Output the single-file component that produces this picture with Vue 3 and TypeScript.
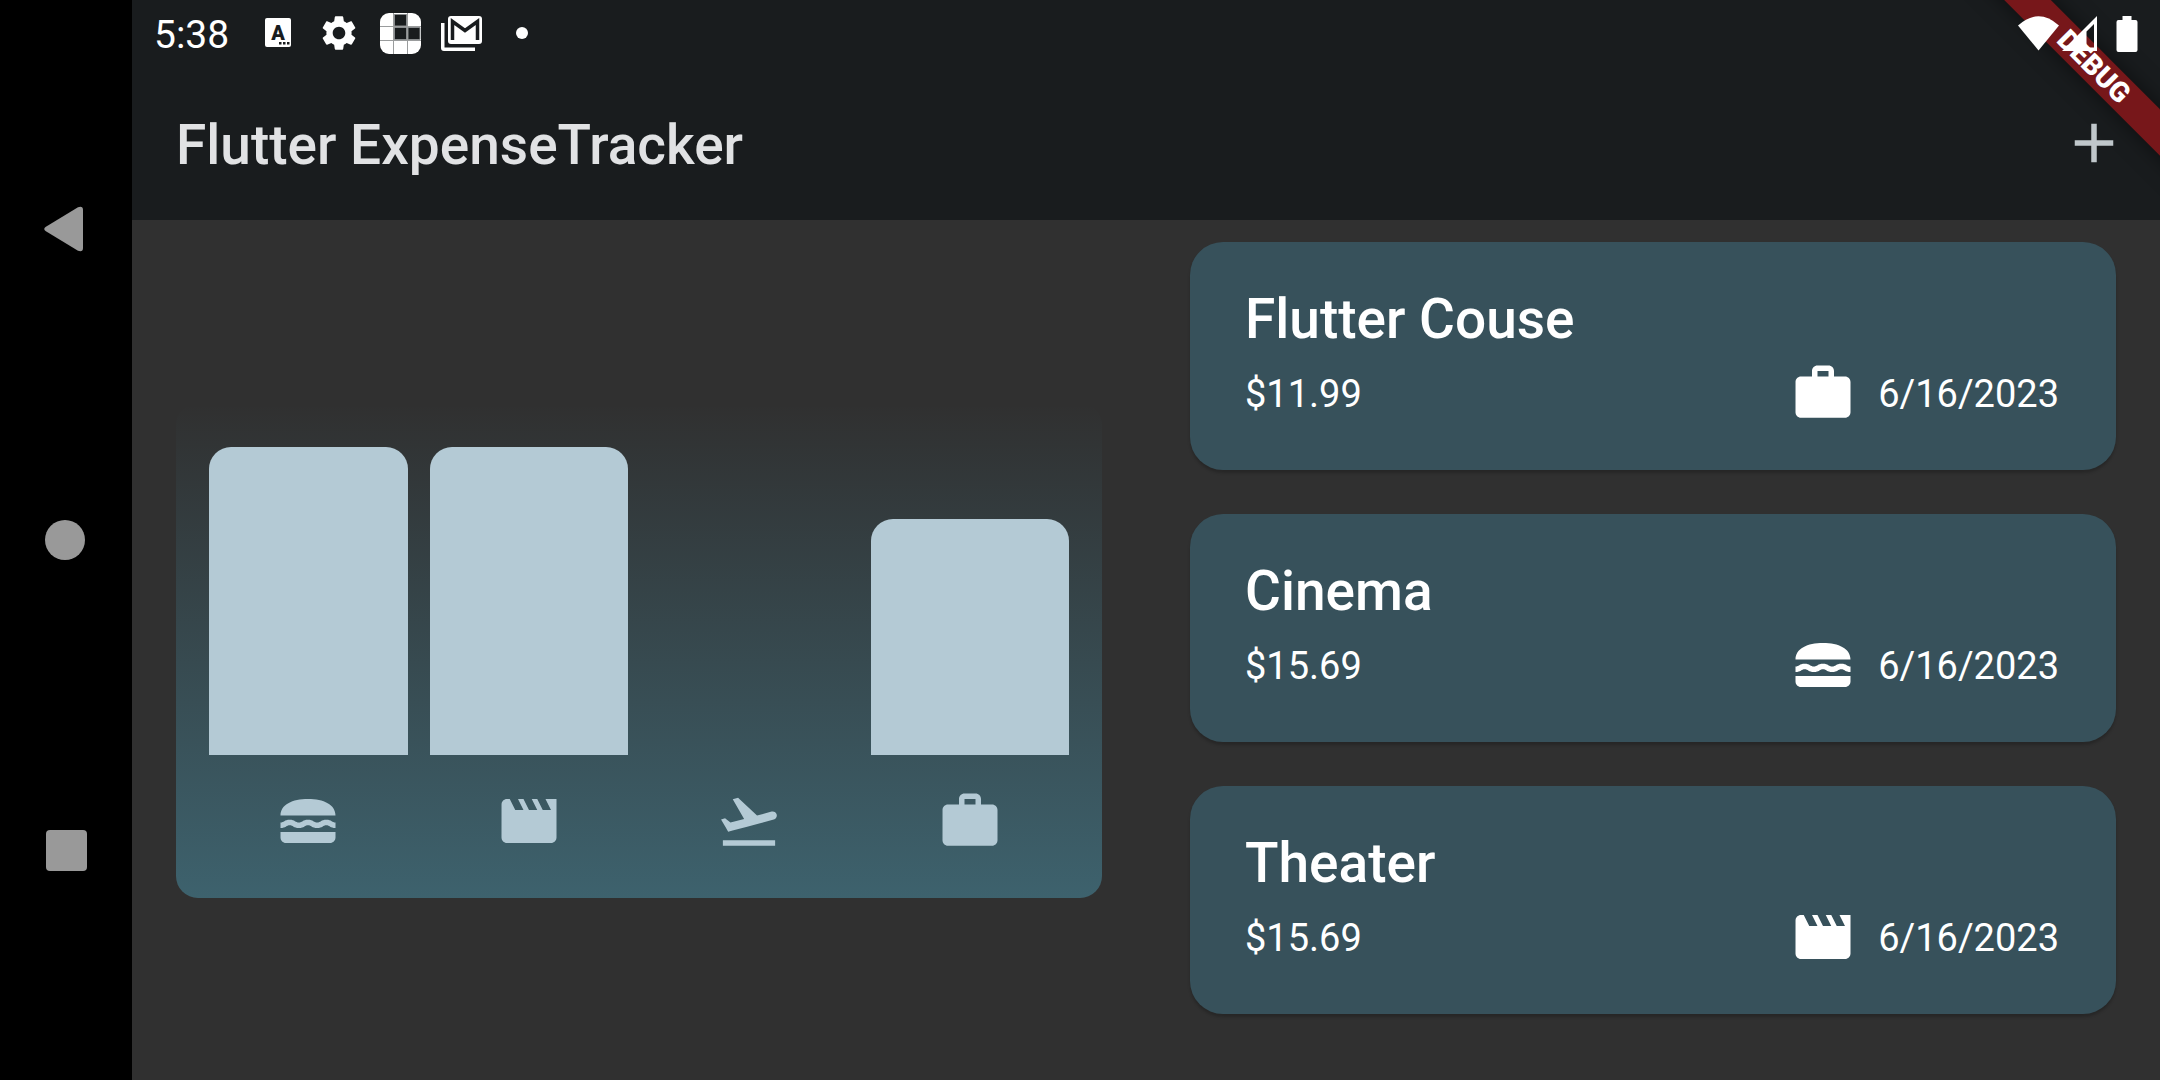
<script setup lang="ts">
type Category = 'food' | 'leisure' | 'travel' | 'work'

interface Expense {
  title: string
  amount: number
  category: Category
  date: string
}

const iconPaths: Record<Category, string> = {
  food: 'M2 16h20v2c0 1.1-.9 2-2 2H4c-1.1 0-2-.9-2-2v-2zM18.66 11.5c-1.95 0-2.09 1-3.33 1-1.19 0-1.42-1-3.33-1-1.95 0-2.09 1-3.33 1-1.19 0-1.42-1-3.33-1-1.95 0-2.09 1-3.34 1v2c1.9 0 2.17-1 3.35-1 1.19 0 1.42 1 3.33 1 1.95 0 2.09-1 3.33-1 1.19 0 1.42 1 3.33 1 1.95 0 2.09-1 3.33-1 1.19 0 1.4 1 3.33 1v-2c-1.24 0-1.38-1-3.33-1zM22 10c.02-4-4.28-6-10-6-5.71 0-10 2-10 6h20z',
  leisure: 'M18 4l2 4h-3l-2-4h-2l2 4h-3l-2-4H8l2 4H7L5 4H4c-1.1 0-1.99.9-1.99 2L2 18c0 1.1.9 2 2 2h16c1.1 0 2-.9 2-2V4h-4z',
  travel: 'M2.5 19h19v2h-19v-2zm19.57-9.36c-.21-.8-1.04-1.28-1.84-1.06L14.92 10l-6.9-6.43-1.93.51 4.14 7.17-4.97 1.33-1.97-1.54-1.45.39 1.82 3.16.77 1.33 1.6-.43 5.31-1.42 4.35-1.16L21 11.49c.81-.23 1.28-1.05 1.07-1.85z',
  work: 'M20 6h-4V4c0-1.11-.89-2-2-2h-4c-1.11 0-2 .89-2 2v2H4c-1.11 0-1.99.89-1.99 2L2 19c0 1.11.89 2 2 2h16c1.11 0 2-.89 2-2V8c0-1.11-.89-2-2-2zm-6 0h-4V4h4v2z',
}

const expenses: Expense[] = [
  { title: 'Flutter Couse', amount: 11.99, category: 'work', date: '6/16/2023' },
  { title: 'Cinema', amount: 15.69, category: 'food', date: '6/16/2023' },
  { title: 'Theater', amount: 15.69, category: 'leisure', date: '6/16/2023' },
]

const categories: Category[] = ['food', 'leisure', 'travel', 'work']

const totals = categories.map((category) => ({
  category,
  total: expenses.filter((e) => e.category === category).reduce((sum, e) => sum + e.amount, 0),
}))
const maxTotal = Math.max(...totals.map((t) => t.total))
</script>

<template>
  <div class="screen">
    <nav class="system-nav" aria-label="System navigation">
      <button type="button" aria-label="Back">
        <svg width="44" height="46" viewBox="2 0 44 46"><path d="M3.500 21L36 1.200Q41 -.500 41 4V42Q41 46.500 36 44.800L3.500 25Q1 23 3.500 21Z" /></svg>
      </button>
      <button type="button" aria-label="Home">
        <svg width="42" height="42" viewBox="1 0 42 42"><circle cx="21" cy="21" r="20" /></svg>
      </button>
      <button type="button" aria-label="Recent apps">
        <svg width="42" height="42" viewBox="0 0 42 42"><rect x="1" width="41" height="41" rx="4" /></svg>
      </button>
    </nav>

    <div class="app">
      <header class="top">
        <div class="status">
          <time class="clock">5:38</time>
          <div class="notifications">
            <svg viewBox="0 0 42 42">
              <rect x="8" y="6" width="26" height="29" rx="2" />
              <text x="21" y="28" class="keyboard-letter">A</text>
              <path d="M22 30h2.500v2.500H22zM26 30h2.500v2.500H26zM30 30h2.500v2.500H30z" fill="#191c1e" />
            </svg>
            <svg viewBox="0 0 24 24">
              <path d="M19.140 12.940c.04-.3.06-.61.06-.94 0-.32-.02-.64-.07-.94l2.030-1.580c.18-.14.23-.41.12-.61l-1.920-3.320c-.12-.22-.37-.29-.59-.22l-2.390.96c-.5-.38-1.030-.7-1.620-.94l-.36-2.540c-.04-.24-.24-.41-.48-.41h-3.840c-.24 0-.43.17-.47.41l-.36 2.540c-.59.24-1.130.57-1.620.94l-2.390-.96c-.22-.08-.47 0-.59.22L2.740 8.870c-.12.21-.08.47.12.61l2.030 1.580c-.05.3-.09.63-.09.94s.02.64.07.94l-2.030 1.580c-.18.14-.23.41-.12.61l1.920 3.320c.12.22.37.29.59.22l2.390-.96c.5.38 1.030.7 1.620.94l.36 2.540c.05.24.24.41.48.41h3.840c.24 0 .44-.17.47-.41l.36-2.540c.59-.24 1.130-.56 1.620-.94l2.390.96c.22.08.47 0 .59-.22l1.920-3.320c.12-.22.07-.47-.12-.61l-2.010-1.580zM12 15.600c-1.980 0-3.600-1.620-3.600-3.600s1.620-3.600 3.600-3.600 3.600 1.620 3.600 3.600-1.620 3.600-3.600 3.600z" />
            </svg>
            <svg viewBox="0 0 42 42">
              <rect x="1" y="1" width="41" height="41" rx="9" />
              <path d="M15.500 2.500h12v11.500h-12zM15.500 15.500h12v12h-12zM29 15.500h12v12H29z" fill="#191c1e" stroke="#888b8d" />
              <path d="M14.500 1V42M28.500 1V42M1 14.500H42M1 28.500H42" stroke="#9a9c9d" fill="none" />
            </svg>
            <svg viewBox="0 0 42 42">
              <path d="M1 11h3.500v24.500H35V39H4Q1 39 1 36z" />
              <rect x="8" y="4" width="34" height="28" rx="3" />
              <path d="M12.500 28V9.500L25 18.500L37.500 9.500V28" fill="none" stroke="#191c1e" stroke-width="3.500" />
            </svg>
            <svg viewBox="0 0 42 42"><circle cx="21" cy="21" r="6" /></svg>
          </div>
          <div class="signals">
            <svg width="42" height="36" viewBox="0 0 42 36"><path d="M1 9.500Q21.500 -9 42 9.500L21.500 34.500Z" /></svg>
            <svg width="36" height="36" viewBox="0 0 36 36"><path fill-rule="evenodd" d="M36 0V35H1ZM25.500 15.500V31.500H33V8Z" /></svg>
            <svg width="22" height="36" viewBox="0 0 22 36"><path d="M6.500 0h9v4H19.500Q21.500 4 21.500 6V34Q21.500 36 19.500 36H2.500Q.5 36 .5 34V6Q.5 4 2.500 4h4z" /></svg>
          </div>
        </div>
        <div class="app-bar">
          <h1>Flutter ExpenseTracker</h1>
          <button type="button" class="add" aria-label="Add expense">
            <svg viewBox="0 0 24 24"><path d="M19 13h-6v6h-2v-6H5v-2h6V5h2v6h6v2z" /></svg>
          </button>
        </div>
      </header>

      <main class="content">
        <section class="chart" aria-label="Expenses by category">
          <div class="bars">
            <div v-for="t in totals" :key="t.category" class="slot">
              <div class="bar" :style="{ height: (t.total / maxTotal) * 100 + '%' }"></div>
            </div>
          </div>
          <div class="legend">
            <svg v-for="t in totals" :key="t.category" class="icon" viewBox="0 0 24 24"><path :d="iconPaths[t.category]" /></svg>
          </div>
        </section>

        <ul class="expenses">
          <li v-for="e in expenses" :key="e.title" class="card">
            <h2>{{ e.title }}</h2>
            <div class="details">
              <span class="value">${{ e.amount.toFixed(2) }}</span>
              <span class="when">
                <svg class="icon" viewBox="0 0 24 24"><path :d="iconPaths[e.category]" /></svg>
                <span class="value">{{ e.date }}</span>
              </span>
            </div>
          </li>
        </ul>
      </main>
    </div>

    <div class="debug-corner">
      <div class="debug-ribbon">DEBUG</div>
    </div>
  </div>
</template>

<style>
body {
  margin: 0;
  background: #303030;
}
</style>

<style scoped>
.screen {
  position: relative;
  display: flex;
  min-height: 100vh;
  font-family: Roboto, "Noto Sans", sans-serif;
  color: #fff;
  background: #303030;
}

svg {
  display: block;
  flex: none;
  fill: currentColor;
}

button {
  display: flex;
  align-items: center;
  justify-content: center;
  padding: 0;
  border: 0;
  background: none;
  color: inherit;
  cursor: pointer;
}

.system-nav {
  display: flex;
  flex: none;
  flex-direction: column;
  box-sizing: border-box;
  width: 132px;
  padding: 73px 0;
  background: #000;
  color: #999;
}

.system-nav button {
  flex: 1;
}

.app {
  display: flex;
  flex: 1;
  flex-direction: column;
  min-width: 0;
}

.top {
  background: #191c1e;
}

.status {
  display: flex;
  align-items: center;
  box-sizing: border-box;
  height: 66px;
  padding: 2px 22px 0;
}

.clock {
  padding-top: 2px;
  font-size: 39px;
  line-height: 62px;
}

.notifications {
  display: flex;
  gap: 19px;
  margin-left: 28px;
}

.notifications svg {
  width: 42px;
  height: 42px;
  margin-top: -2px;
}

.keyboard-letter {
  font-size: 20px;
  font-weight: 900;
  text-anchor: middle;
  fill: #191c1e;
}

.signals {
  position: relative;
  z-index: 2;
  display: flex;
  gap: 2px;
  margin-left: auto;
}

.signals svg:last-child {
  margin-left: 17px;
}

.app-bar {
  display: flex;
  align-items: center;
  justify-content: space-between;
  height: 154px;
  padding: 0 33px 0 44px;
}

h1,
h2 {
  margin: 0;
  font-size: 55px;
  font-weight: 500;
}

h1 {
  padding-top: 4px;
  line-height: 66px;
  color: #e1e2e4;
}

.add {
  color: #c0c7cb;
}

.add svg,
.icon {
  width: 66px;
  height: 66px;
}

.content {
  display: grid;
  flex: 1;
  grid-template-columns: 1fr 1fr;
}

.chart {
  display: flex;
  flex-direction: column;
  align-self: center;
  gap: 33px;
  margin: 0 44px;
  padding: 44px 22px;
  border-radius: 22px;
  background: linear-gradient(to top, rgba(92, 213, 251, 0.3), rgba(92, 213, 251, 0));
  color: #b4cad5;
}

.bars {
  display: flex;
  height: 308px;
}

.slot {
  display: flex;
  flex: 1;
  align-items: flex-end;
  padding: 0 11px;
}

.bar {
  flex: 1;
  border-radius: 22px 22px 0 0;
  background: currentColor;
}

.legend {
  display: grid;
  grid-template-columns: repeat(4, 1fr);
  justify-items: center;
}

.expenses {
  display: flex;
  flex-direction: column;
  gap: 44px;
  margin: 0;
  padding: 22px 44px;
  list-style: none;
}

.card {
  display: flex;
  flex-direction: column;
  gap: 8px;
  padding: 44px 57px 44px 55px;
  border-radius: 33px;
  background: #37515b;
  box-shadow: 0 3px 3px rgba(0, 0, 0, 0.2);
}

h2 {
  line-height: 66px;
}

.details {
  display: flex;
  align-items: center;
  justify-content: space-between;
}

.value {
  padding-top: 2px;
  font-size: 38px;
  line-height: 62px;
}

.when {
  display: flex;
  align-items: center;
  gap: 22px;
}

.debug-corner {
  position: absolute;
  top: 0;
  right: 0;
  width: 200px;
  height: 200px;
  overflow: hidden;
  pointer-events: none;
}

.debug-ribbon {
  position: absolute;
  top: 50px;
  right: -94px;
  width: 320px;
  font-size: 28px;
  font-weight: 900;
  line-height: 33px;
  text-align: center;
  background: #77171a;
  box-shadow: 0 0 22px rgba(0, 0, 0, 0.5);
  transform: rotate(45deg);
}
</style>
